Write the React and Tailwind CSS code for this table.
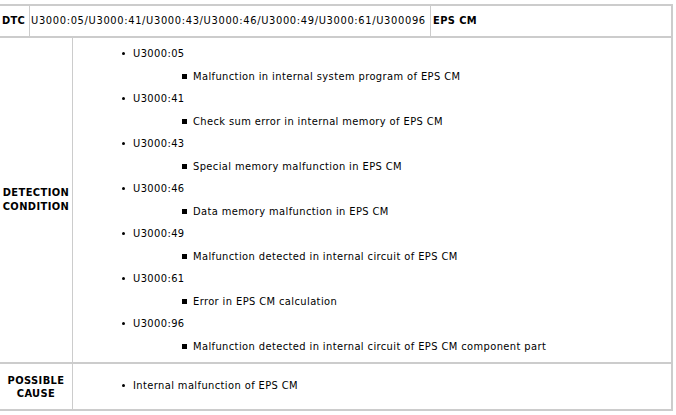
const items = [
  { code: "U3000:05", text: "Malfunction in internal system program of EPS CM" },
  { code: "U3000:41", text: "Check sum error in internal memory of EPS CM" },
  { code: "U3000:43", text: "Special memory malfunction in EPS CM" },
  { code: "U3000:46", text: "Data memory malfunction in EPS CM" },
  { code: "U3000:49", text: "Malfunction detected in internal circuit of EPS CM" },
  { code: "U3000:61", text: "Error in EPS CM calculation" },
  { code: "U3000:96", text: "Malfunction detected in internal circuit of EPS CM component part" },
];

function Dot() {
  return <span className="inline-block w-[3px] h-[3px] rounded-full bg-black mr-[8px] mb-[2px]" />;
}

function Square() {
  return <span className="inline-block w-[5px] h-[5px] bg-black mr-[6px] mb-[1px]" />;
}

export default function App() {
  return (
    <div
      className="bg-white w-[676px] h-[415px] pt-[4px] text-[11px] text-black tracking-[0.4px]"
      style={{ fontFamily: '"DejaVu Sans Condensed", "DejaVu Sans", sans-serif' }}
    >
      <div className="w-[673px] border-y-2 border-r-2 border-[#cccccc]">
        {/* DTC row */}
        <div className="flex h-[32px] border-b-2 border-[#cccccc]">
          <div className="w-[30px] flex items-center pl-[2px] border-r border-[#cccccc] font-bold tracking-[0.3px]">DTC</div>
          <div className="w-[401px] flex items-center pl-[1px] border-r border-[#cccccc] tracking-[0.65px]">
            U3000:05/U3000:41/U3000:43/U3000:46/U3000:49/U3000:61/U300096
          </div>
          <div className="flex-1 flex items-center pl-[2px] font-bold">EPS CM</div>
        </div>

        {/* Detection condition */}
        <div className="flex h-[326px] border-b-2 border-[#cccccc]">
          <div className="w-[73px] flex items-center justify-center text-center border-r border-[#cccccc] font-bold leading-[14px]">
            DETECTION<br />CONDITION
          </div>
          <div className="flex-1 pt-[5px] pl-[49px]">
            {items.map((it) => (
              <div key={it.code}>
                <div className="h-[23px] flex items-center">
                  <Dot />
                  {it.code}
                </div>
                <div className="h-[22px] flex items-center pl-[60px]">
                  <Square />
                  {it.text}
                </div>
              </div>
            ))}
          </div>
        </div>

        {/* Possible cause */}
        <div className="flex h-[45px]">
          <div className="w-[73px] flex items-center justify-center text-center border-r border-[#cccccc] font-bold leading-[13px]">
            POSSIBLE<br />CAUSE
          </div>
          <div className="flex-1 flex items-center pl-[49px]">
            <Dot />
            Internal malfunction of EPS CM
          </div>
        </div>
      </div>
    </div>
  );
}
